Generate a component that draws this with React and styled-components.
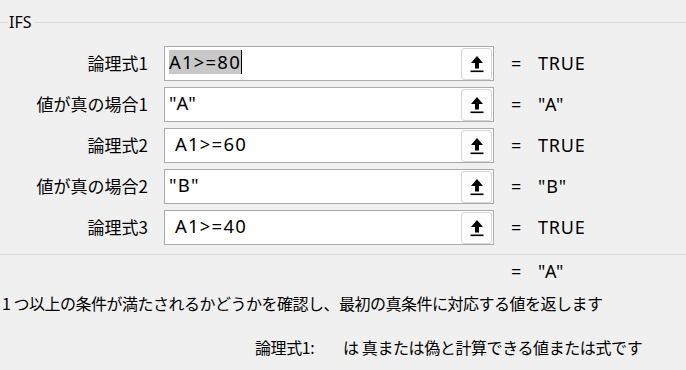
import React from "react";
import styled, { createGlobalStyle } from "styled-components";

const GlobalStyle = createGlobalStyle`
  html, body {
    margin: 0;
    padding: 0;
    background: #f0f0f0;
  }
  body {
    font-family: "Noto Sans", "Noto Sans CJK JP", sans-serif;
    color: #000;
  }
`;

const Dialog = styled.div`
  width: 686px;
  height: 370px;
  overflow: hidden;
  background: #f0f0f0;
`;

const GroupHead = styled.div`
  display: flex;
  align-items: center;
  padding-top: 13px;
  height: 18px;
`;

const GroupLine = styled.div`
  height: 1px;
  background: #dcdcdc;
  width: ${(p) => (p.$grow ? "auto" : "8px")};
  flex: ${(p) => (p.$grow ? 1 : "none")};
`;

const GroupTitle = styled.span`
  font-size: 16px;
  padding: 0 2px 0 1px;
  line-height: 18px;
`;

const Rows = styled.div`
  display: flex;
  flex-direction: column;
  gap: 6px;
  margin-top: 15px;
`;

const Row = styled.div`
  display: flex;
  align-items: center;
  height: 35px;
`;

const Label = styled.div`
  width: 148px;
  text-align: right;
  font-family: "Noto Sans CJK JP", sans-serif;
  font-size: 17px;
  margin-top: -2px;
`;

const Box = styled.div`
  margin-left: 16px;
  width: 330px;
  height: 35px;
  box-sizing: border-box;
  border: 1px solid #ababab;
  background: #fff;
  display: flex;
  align-items: center;
  padding: 0 1px 0 4px;
`;

const Field = styled.div`
  flex: 1;
  display: flex;
  align-items: center;
  font-size: 18.5px;
  letter-spacing: 1.2px;
  white-space: pre;
  height: 24px;
  margin-top: -4px;
`;

const Selected = styled.span`
  background: #c8c8c8;
  line-height: 24px;
`;

const Caret = styled.span`
  width: 1px;
  height: 24px;
  background: #000;
`;

const RefButton = styled.button`
  width: 31px;
  height: 32px;
  padding: 0;
  border: 1px solid #d6d6d6;
  border-radius: 3px;
  background: #fdfdfd;
  display: flex;
  align-items: center;
  justify-content: center;
`;

const Result = styled.div`
  display: flex;
  align-items: center;
  margin-left: ${(p) => p.$offset || 17}px;
  font-size: 18px;
  letter-spacing: 0.8px;
  white-space: pre;
  margin-top: -2px;
`;

const Eq = styled.span`
  width: 27px;
`;

const Separator = styled.div`
  height: 1px;
  background: #dcdcdc;
  margin-top: 9px;
`;

const FinalRow = styled(Row)`
  height: 26px;
  margin-top: 4px;
`;

const Description = styled.div`
  font-family: "Noto Sans CJK JP", sans-serif;
  font-size: 16px;
  letter-spacing: -0.5px;
  padding-left: 2px;
  line-height: 22px;
  margin-top: 7px;
  white-space: nowrap;
`;

const Help = styled.div`
  display: flex;
  font-family: "Noto Sans CJK JP", sans-serif;
  font-size: 16px;
  letter-spacing: -0.4px;
  padding-left: 255px;
  margin-top: 22px;
  line-height: 22px;
`;

const HelpName = styled.span`
  width: 88px;
`;

const ArrowIcon = () => (
  <svg width="16" height="18" viewBox="0 0 16 18">
    <path d="M8 1 L14 8 H10 V13.5 H6 V8 H2 Z" fill="#000" />
    <rect x="1.5" y="15.5" width="13" height="1.6" fill="#000" />
  </svg>
);

const args = [
  { label: "論理式1", value: "A1>=80", result: "TRUE", active: true },
  { label: "値が真の場合1", value: '"A"', result: '"A"' },
  { label: "論理式2", value: " A1>=60", result: "TRUE" },
  { label: "値が真の場合2", value: '"B"', result: '"B"' },
  { label: "論理式3", value: " A1>=40", result: "TRUE" },
];

export default function App() {
  return (
    <Dialog>
      <GlobalStyle />
      <GroupHead>
        <GroupLine />
        <GroupTitle>IFS</GroupTitle>
        <GroupLine $grow />
      </GroupHead>
      <Rows>
        {args.map((a) => (
          <Row key={a.label}>
            <Label>{a.label}</Label>
            <Box>
              <Field>
                {a.active ? (
                  <>
                    <Selected>{a.value}</Selected>
                    <Caret />
                  </>
                ) : (
                  a.value
                )}
              </Field>
              <RefButton>
                <ArrowIcon />
              </RefButton>
            </Box>
            <Result>
              <Eq>=</Eq>
              {a.result}
            </Result>
          </Row>
        ))}
      </Rows>
      <Separator />
      <FinalRow>
        <Result $offset={511}>
          <Eq>=</Eq>
          "A"
        </Result>
      </FinalRow>
      <Description>
        1 つ以上の条件が満たされるかどうかを確認し、最初の真条件に対応する値を返します
      </Description>
      <Help>
        <HelpName>論理式1:</HelpName>
        <span>は 真または偽と計算できる値または式です</span>
      </Help>
    </Dialog>
  );
}
